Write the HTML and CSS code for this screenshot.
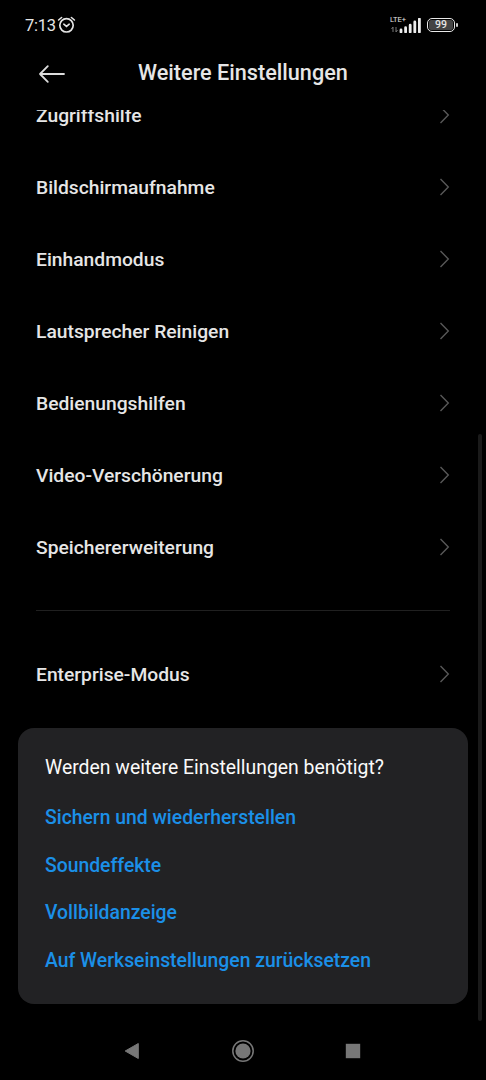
FILE: index.html
```html
<!DOCTYPE html>
<html lang="de">
<head>
<meta charset="utf-8">
<title>Weitere Einstellungen</title>
<link rel="stylesheet" href="styles.css">
</head>
<body>
<svg class="defs" width="0" height="0"><symbol id="chev" viewBox="0 0 10 18"><path d="M.5 1 8.3 9 .5 17" fill="none" stroke="#585858" stroke-width="1.4"/></symbol></svg>
<div class="phone">
  <div class="status">
    <span class="time">7:13</span>
    <svg class="alarm" width="20" height="18" viewBox="0 0 20 18" fill="none" stroke="#e4e4e4" stroke-linecap="round"><circle cx="9.5" cy="9.3" r="6.7" stroke-width="1.7"/><path d="M1.6 4 4.6 1.5M14.4 1.5l3 2.5" stroke-width="1.6"/><path d="m6.8 8.2 2.7 2.2 2.7-2.2" stroke-width="1.6"/></svg>
    <div class="network">
      <span class="lte">LTE+</span>
      <svg class="signal" width="32" height="15" viewBox="0 0 32 15"><path d="M3 9v5M3 9 1.5 11M6 14V9m0 5 1.5-2" stroke="#777" stroke-width="1" fill="none"/><path d="M11 12v2M15.6 9.7V14M20.2 7.2V14M24.8 4V14M29.4 1V14" stroke="#ededed" stroke-width="2.8" stroke-linecap="round"/></svg>
    </div>
    <div class="battery"><span>99</span></div><i class="tip"></i>
  </div>
  <header class="header">
    <svg class="back" width="28" height="20" viewBox="0 0 28 20" fill="none" stroke="#dcdcdc" stroke-width="1.8" stroke-linecap="round" stroke-linejoin="round"><path d="M26 10H2M9.8 2.2 2 10l7.8 7.8"/></svg>
    <h1>Weitere Einstellungen</h1>
  </header>
  <main class="content">
    <div class="list">
      <div class="row"><span>Zugriffshilfe</span><svg><use href="#chev"/></svg></div>
      <div class="row"><span>Bildschirmaufnahme</span><svg><use href="#chev"/></svg></div>
      <div class="row"><span>Einhandmodus</span><svg><use href="#chev"/></svg></div>
      <div class="row"><span>Lautsprecher Reinigen</span><svg><use href="#chev"/></svg></div>
      <div class="row"><span>Bedienungshilfen</span><svg><use href="#chev"/></svg></div>
      <div class="row"><span>Video-Verschönerung</span><svg><use href="#chev"/></svg></div>
      <div class="row"><span>Speichererweiterung</span><svg><use href="#chev"/></svg></div>
      <hr>
      <div class="row"><span>Enterprise-Modus</span><svg><use href="#chev"/></svg></div>
    </div>
    <section class="card">
      <p>Werden weitere Einstellungen benötigt?</p>
      <a>Sichern und wiederherstellen</a>
      <a>Soundeffekte</a>
      <a>Vollbildanzeige</a>
      <a>Auf Werkseinstellungen zurücksetzen</a>
    </section>
    <div class="scrollbar"></div>
  </main>
  <nav class="nav">
    <svg width="16" height="18" viewBox="0 0 16 18"><path d="M1.2 9 14.3 1.5v15z" fill="#777" stroke="#777" stroke-linejoin="round"/></svg>
    <svg width="24" height="24" viewBox="0 0 24 24"><circle cx="12" cy="12" r="10.2" fill="none" stroke="#777" stroke-width="1.5"/><circle cx="12" cy="12" r="7.6" fill="#777"/></svg>
    <svg width="16" height="16" viewBox="0 0 16 16"><path d="M.8.8h14.4v14.4H.8z" fill="#777"/></svg>
  </nav>
</div>
</body>
</html>
```
FILE: styles.css
```css
body { margin: 0; background: #000; }
.defs { position: absolute; }
.phone { width: 486px; height: 1080px; display: flex; flex-direction: column; overflow: hidden; background: #000; color: #e6e6e6; font-family: Roboto, sans-serif; }
.status { height: 48px; flex: none; display: flex; align-items: center; box-sizing: border-box; padding: 2px 28px 0 25px; }
.time { width: 32px; padding-top: 2px; font-size: 16.5px; line-height: 20px; white-space: nowrap; letter-spacing: -.3px; }
.alarm { display: block; }
.network { margin-left: auto; width: 32px; height: 18px; display: grid; }
.lte, .signal { grid-area: 1 / 1; }
.lte { font-size: 7.5px; line-height: 8px; }
.signal { display: block; margin-top: 2px; }
.battery { margin-left: 5px; width: 28px; height: 14px; box-sizing: border-box; border: 1.5px solid #e8e8e8; border-radius: 5px; padding: 1px; font-size: 10.5px; line-height: 10px; font-weight: 500; text-align: center; }
.battery span { display: block; background: #444; border-radius: 2px; }
.tip { width: 2px; height: 4px; margin-left: 1px; background: #ccc; border-radius: 1px; }
.header { height: 62px; flex: none; display: flex; align-items: flex-start; }
.back { margin: 16px 0 0 38px; flex: none; }
.header h1 { margin: 12px 0 0 72px; font-size: 21.65px; line-height: 26px; font-weight: 500; white-space: nowrap; }
.content { height: 911px; flex: none; overflow: hidden; position: relative; }
.list { margin-top: -31px; padding: 0 36px; }
.row { height: 72px; display: flex; align-items: center; justify-content: space-between; font-size: 19.25px; font-weight: 500; }
.row svg { width: 10px; height: 18px; }
.row span { padding-top: 2px; line-height: 24px; }
hr { border: 0; height: 1px; margin: 27px 0; background: #202020; }
.card { margin: 18px 18px 0; height: 276px; box-sizing: border-box; background: #222224; border-radius: 16px; padding: 28px 27px 26px; display: flex; flex-direction: column; }
.card p { margin: 0 0 14px; font-size: 19.4px; line-height: 24px; color: #fafafa; white-space: nowrap; }
.card a { flex: none; height: 47.7px; line-height: 47.7px; font-size: 19.35px; font-weight: 500; color: #1b90e8; white-space: nowrap; }
.scrollbar { position: absolute; right: 4px; top: 324px; width: 4px; height: 587px; border-radius: 2px; background: #1a1a1a; }
.nav { flex: 1; display: flex; align-items: center; justify-content: space-between; padding: 0 125px 0 124px; }
```
